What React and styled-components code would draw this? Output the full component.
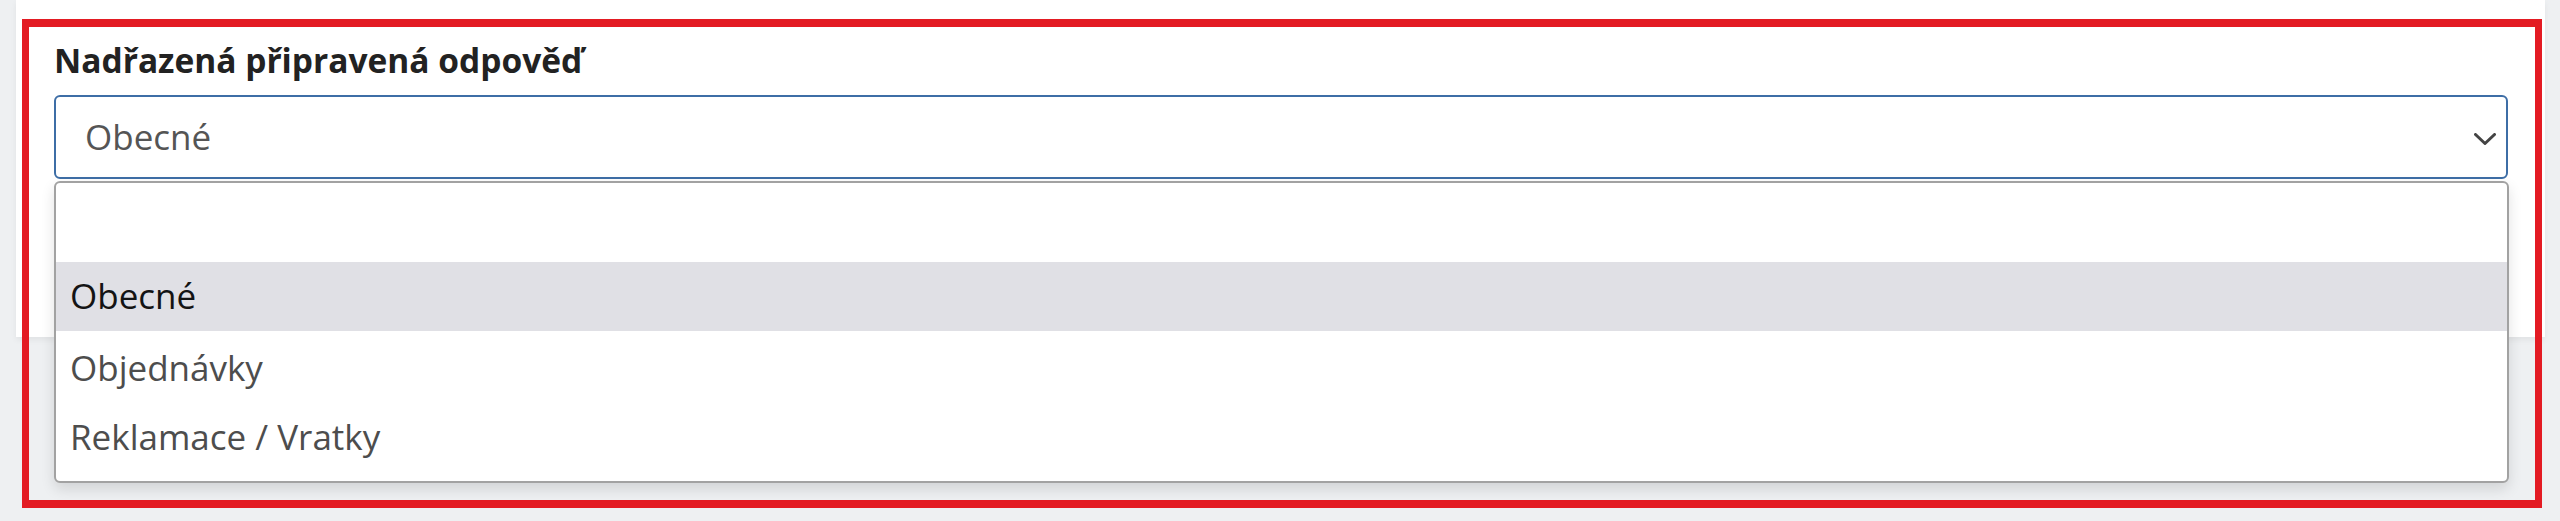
import React, { useState } from 'react';
import styled, { createGlobalStyle } from 'styled-components';

const GlobalStyle = createGlobalStyle`
  html, body {
    margin: 0;
    padding: 0;
    background: #eef0f2;
    font-family: "Open Sans", "Noto Sans", sans-serif;
  }
`;

const options = ['Obecné', 'Objednávky', 'Reklamace / Vratky'];

const Page = styled.div`
  position: relative;
  min-height: 521px;
  padding: 0 15px 0 16px;
  box-sizing: border-box;
`;

const Card = styled.div`
  height: 337px;
  background: #ffffff;
  box-shadow: 0 3px 6px rgba(0, 0, 0, 0.06);
  padding: 38px 37px 0 38px;
  box-sizing: border-box;
`;

const Label = styled.div`
  font-size: 33.5px;
  line-height: 44px;
  font-weight: 700;
  color: #222;
  margin-bottom: 13px;
`;

const Field = styled.div`
  position: relative;
`;

const SelectBox = styled.div`
  height: 84px;
  box-sizing: border-box;
  border: 2px solid #3e6ea6;
  border-radius: 6px;
  padding: 20px 10px 20px 29px;
  font-size: 35px;
  line-height: 40px;
  color: #555;
  display: flex;
  justify-content: space-between;
  align-items: flex-start;
`;

const Chevron = styled.svg`
  width: 22px;
  height: 12px;
  margin-top: 16px;
  color: #444;
`;

const Menu = styled.div`
  position: absolute;
  top: 86px;
  left: 0;
  right: -1px;
  height: 302px;
  box-sizing: border-box;
  background: #fff;
  border: 2px solid #a2a2a2;
  border-radius: 6px;
  box-shadow: 0 6px 14px rgba(0, 0, 0, 0.12);
  overflow: hidden;
`;

const Search = styled.div`
  height: 79px;
`;

const Option = styled.div`
  height: 69px;
  padding: ${p => (p.active ? '0 14px 3px' : '3px 14px 0')};
  box-sizing: border-box;
  display: flex;
  align-items: center;
  font-size: 35px;
  color: ${p => (p.active ? '#141414' : '#4d4d4d')};
  background: ${p => (p.active ? '#e0e0e5' : '#fff')};
`;

const Highlight = styled.div`
  position: absolute;
  left: 22px;
  top: 19px;
  width: 2520px;
  height: 489px;
  box-sizing: border-box;
  border-style: solid;
  border-color: #e31b23;
  border-width: 8px 7px;
  pointer-events: none;
`;

const App = () => {
  const [selected] = useState(0);
  return (
    <>
      <GlobalStyle />
      <Page>
        <Card>
          <Label>Nadřazená připravená odpověď</Label>
          <Field>
            <SelectBox>
              <span>{options[selected]}</span>
              <Chevron viewBox="0 0 22 12" fill="none">
                <path d="M1.5 1.5 L11 10.5 L20.5 1.5" stroke="currentColor" strokeWidth="3" strokeLinecap="round" strokeLinejoin="round" />
              </Chevron>
            </SelectBox>
            <Menu>
              <Search />
              {options.map((o, i) => (
                <Option key={o} active={i === selected}>{o}</Option>
              ))}
            </Menu>
          </Field>
        </Card>
        <Highlight />
      </Page>
    </>
  );
};

export default App;
